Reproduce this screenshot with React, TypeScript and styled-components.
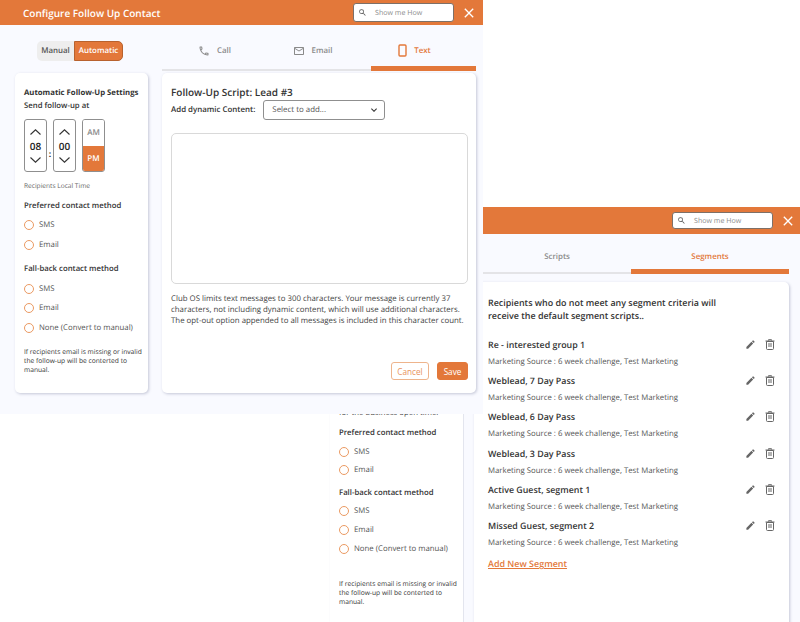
import React from "react";
import styled, { createGlobalStyle } from "styled-components";
import { MdEdit, MdOutlineEmail, MdOutlineLocalPhone, MdSearch, MdClose, MdKeyboardArrowDown } from "react-icons/md";

const orange = "#e3783a";
const pageBg = "#f9faff";

const Global = createGlobalStyle`
  html, body { margin: 0; padding: 0; background: #fff; }
  * { box-sizing: border-box; }
  body {
    font-family: "Open Sans", "Liberation Sans", sans-serif;
    color: #333;
    text-rendering: geometricPrecision;
  }
`;

const Canvas = styled.div`
  position: relative;
  width: 800px;
  height: 622px;
  overflow: hidden;
`;

/* the three screens are pasted on a free canvas */
const MainWindow = styled.section`
  position: absolute;
  left: 0;
  top: 0;
  width: 483px;
  height: 414px;
  background: ${pageBg};
  z-index: 2;
`;

const SegmentsWindow = styled.section`
  position: absolute;
  left: 464px;
  top: 207px;
  width: 336px;
  height: 415px;
  background: ${pageBg};
  z-index: 1;
`;

const CutOffWindow = styled.section`
  position: absolute;
  left: 330px;
  top: 414px;
  width: 134px;
  height: 208px;
  background: #fff;
  border-right: 1px solid #e3e5ee;
  box-shadow: 1px 0 2px rgba(60, 70, 110, 0.18);
  padding: 0 4px 0 9px;
  overflow: hidden;
  z-index: 1;
`;

const Header = styled.header<{ $h: number; $left: number; $right: number }>`
  height: ${(p) => p.$h}px;
  background: ${orange};
  display: flex;
  align-items: center;
  padding-left: ${(p) => p.$left}px;
  padding-right: ${(p) => p.$right}px;
`;

const HeaderTitle = styled.h1`
  flex: 1;
  margin: 0;
  color: #fff;
  font-size: 10px;
  font-weight: 600;
`;

const SearchBox = styled.div<{ $h: number }>`
  width: 101px;
  height: ${(p) => p.$h}px;
  background: #fff;
  border: 1px solid #7d7068;
  border-radius: 3px;
  display: flex;
  align-items: center;
  padding-left: 4px;
  gap: 8px;
  color: #8c8c8c;
  font-size: 7.1px;
`;

const CloseBtn = styled.span`
  width: 24px;
  margin-left: 3px;
  display: flex;
  justify-content: center;
  color: #fff;
  font-size: 16px;
`;

const TopRow = styled.div`
  display: flex;
  height: 46px;
`;

const ToggleArea = styled.div`
  width: 162px;
  padding: 16px 0 0 37px;
`;

const Toggle = styled.div`
  display: flex;
  width: 86px;
  height: 20px;
  font-size: 7.9px;
  font-weight: 600;
`;

const ToggleSide = styled.span<{ $on?: boolean }>`
  flex: ${(p) => (p.$on ? "0 0 49px" : "1")};
  display: flex;
  align-items: center;
  justify-content: center;
  border-radius: ${(p) => (p.$on ? "0 5px 5px 0" : "5px 0 0 5px")};
  background: ${(p) => (p.$on ? orange : "#eeeeee")};
  border: ${(p) => (p.$on ? "1px solid #b8622e" : "none")};
  color: ${(p) => (p.$on ? "#fff" : "#555")};
`;

const Tabs = styled.nav<{ $w: number }>`
  width: ${(p) => p.$w}px;
  display: flex;
`;

const Tab = styled.div<{ $w: number; $on?: boolean; $h: number; $shift?: number }>`
  width: ${(p) => p.$w}px;
  height: ${(p) => p.$h}px;
  display: flex;
  align-items: center;
  justify-content: center;
  gap: 7px;
  padding-top: ${(p) => (p.$on ? 10 : 7)}px;
  padding-right: ${(p) => p.$shift ?? 0}px;
  font-size: 7.9px;
  font-weight: 600;
  color: ${(p) => (p.$on ? orange : "#8a8a8a")};
  border-bottom: 2px solid #e4e4e7;
  ${(p) => p.$on && `border-bottom: 5px solid ${orange};`}
`;

const Columns = styled.div`
  display: flex;
  gap: 14px;
  padding: 2px 0 0 15px;
`;

const Card = styled.div`
  background: #fff;
  border-radius: 5px;
  box-shadow: 1px 1px 3px rgba(60, 70, 110, 0.28);
`;

const SettingsCard = styled(Card)`
  width: 133px;
  height: 320px;
  padding: 14px 5px 13px 9px;
`;

const ScriptCard = styled(Card)`
  width: 314px;
  height: 320px;
  padding: 12px 8px 0 9px;
  display: flex;
  flex-direction: column;
`;

const CardHeading = styled.div`
  font-size: 7.76px;
  font-weight: 700;
  line-height: 13px;
  white-space: nowrap;
`;

const SendAt = styled.div`
  font-size: 7.75px;
  font-weight: 600;
  line-height: 13px;
`;

const TimeRow = styled.div`
  display: flex;
  margin-top: 6px;
  align-items: center;
`;

const Spinner = styled.div`
  width: 23px;
  height: 53px;
  border: 1px solid #8f8f8f;
  border-radius: 3px;
  display: flex;
  flex-direction: column;
  align-items: center;
  justify-content: center;
  gap: 4px;
  font-size: 10px;
  font-weight: 600;
  line-height: 14px;
  color: #222;
`;

const Colon = styled.span`
  width: 6px;
  text-align: center;
  font-size: 8.5px;
  font-weight: 700;
  padding-top: 18px;
`;

const AmPm = styled.div`
  width: 23px;
  height: 53px;
  margin-left: 6px;
  border: 1px solid #8f8f8f;
  border-radius: 3px;
  overflow: hidden;
  display: flex;
  flex-direction: column;
  font-size: 8px;
  font-weight: 600;
`;

const Meridiem = styled.span<{ $on?: boolean }>`
  flex: 1;
  display: flex;
  align-items: center;
  justify-content: center;
  background: ${(p) => (p.$on ? orange : "#fff")};
  color: ${(p) => (p.$on ? "#fff" : "#8a8a8a")};
`;

const LocalTime = styled.div`
  margin-top: 9px;
  font-size: 6.6px;
  color: #666;
  line-height: 10px;
`;

const MethodTitle = styled.div<{ $top: number }>`
  margin-top: ${(p) => p.$top}px;
  font-size: 7.75px;
  font-weight: 600;
  line-height: 12px;
  color: #333;
  white-space: nowrap;
`;

const MethodRow = styled.div<{ $top: number }>`
  margin-top: ${(p) => p.$top}px;
  display: flex;
  align-items: center;
  gap: 5px;
  height: 12px;
  font-size: 7.8px;
  color: #555;
`;

const Radio = styled.span`
  width: 10px;
  height: 10px;
  border-radius: 50%;
  border: 1px solid #eb9a62;
`;

const Note = styled.p<{ $top: number }>`
  margin: ${(p) => p.$top}px 0 0;
  font-size: 6.7px;
  line-height: 9.2px;
  color: #333;
`;

const ScriptTitle = styled.h2`
  margin: 0;
  font-size: 10px;
  font-weight: 600;
  line-height: 15px;
  color: #333;
`;

const DynamicRow = styled.div`
  display: flex;
  align-items: center;
  gap: 8px;
  font-size: 7.9px;
  font-weight: 600;
`;

const SelectBox = styled.div`
  width: 122px;
  height: 20px;
  border: 1px solid #8f8f8f;
  border-radius: 3px;
  display: flex;
  align-items: center;
  justify-content: space-between;
  padding: 0 4px 0 8px;
  font-size: 7.9px;
  font-weight: 400;
  color: #555;
`;

const MessageBox = styled.div`
  margin-top: 13px;
  width: 297px;
  height: 151px;
  border: 1px solid #d9d9d9;
  border-radius: 5px;
`;

const Hint = styled.p`
  margin: 10px 0 0;
  font-size: 7.85px;
  line-height: 10.8px;
  color: #444;
  white-space: nowrap;
`;

const Actions = styled.div`
  margin-top: auto;
  margin-bottom: 13px;
  display: flex;
  justify-content: flex-end;
  gap: 8px;
  width: 297px;
`;

const Button = styled.button<{ $primary?: boolean }>`
  height: 18px;
  width: ${(p) => (p.$primary ? 31 : 38)}px;
  padding: 0;
  border-radius: 3px;
  font: 400 8.2px "Open Sans", sans-serif;
  color: ${(p) => (p.$primary ? "#fff" : "#e8925c")};
  background: ${(p) => (p.$primary ? orange : "#fff")};
  border: 1px solid ${(p) => (p.$primary ? orange : "#eeb48c")};
`;

const SegmentsHeaderWrap = styled.div`
  padding-left: 19px;
`;

const SegmentsTabs = styled.div`
  padding: 0 0 0 19px;
  height: 40px;
`;

const SegmentsCard = styled(Card)`
  margin: 8px 0 0 10px;
  width: 315px;
  height: 360px;
  border-radius: 5px 5px 0 0;
  padding: 14px 14px 0 14px;
`;

const Intro = styled.p`
  margin: 0;
  font-size: 8.93px;
  font-weight: 600;
  line-height: 13.4px;
  color: #333;
`;

const SegmentList = styled.div`
  margin-top: 16px;
  display: flex;
  flex-direction: column;
  gap: 6.5px;
`;

const SegmentRow = styled.div`
  position: relative;
  height: 29.8px;
`;

const SegmentName = styled.div`
  font-size: 8.85px;
  font-weight: 600;
  line-height: 13px;
  color: #333;
`;

const SegmentSource = styled.div`
  margin-top: 4px;
  font-size: 7.8px;
  line-height: 12px;
  color: #555;
`;

const SegmentActions = styled.div`
  position: absolute;
  right: 0;
  top: 0;
  display: flex;
  gap: 9px;
  align-items: center;
  color: #666;
`;

const AddLink = styled.a`
  display: inline-block;
  font-size: 8.95px;
  font-weight: 600;
  color: ${orange};
  text-decoration: underline;
`;

const ClippedLine = styled.div`
  margin-top: -6px;
  height: 10px;
  font-size: 7.8px;
  color: #444;
`;

const TrashIcon = () => (
  <svg width="10" height="11" viewBox="0 0 10 11" fill="none" stroke="#666" strokeWidth="1">
    <path d="M1.5 2.5h7v7a1 1 0 0 1-1 1h-5a1 1 0 0 1-1-1z" />
    <path d="M0.5 2h9M3.5 1.5V.7h3v.8M3 5h4M3 7h4" />
  </svg>
);

const PhoneFrame = () => (
  <svg width="9" height="13" viewBox="0 0 9 13" fill="none">
    <rect x="1" y="1" width="7" height="11" rx="1" stroke={orange} strokeWidth="1.4" />
  </svg>
);

const Chevron = ({ up }: { up?: boolean }) => (
  <svg width="11" height="6" viewBox="0 0 11 6" fill="none" stroke="#333" strokeWidth="1.1">
    <path d={up ? "M0.5 5.5L5.5 0.8L10.5 5.5" : "M0.5 0.5L5.5 5.2L10.5 0.5"} />
  </svg>
);

const segments = [
  "Re - interested group 1",
  "Weblead, 7 Day Pass",
  "Weblead, 6 Day Pass",
  "Weblead, 3 Day Pass",
  "Active Guest, segment 1",
  "Missed Guest, segment 2",
];

const Option = ({ label, top }: { label: string; top: number }) => (
  <MethodRow $top={top}>
    <Radio />
    {label}
  </MethodRow>
);

const Search = ({ h }: { h: number }) => (
  <SearchBox $h={h}>
    <MdSearch size={9} color="#555" />
    <span>Show me How</span>
  </SearchBox>
);

export default function App() {
  return (
    <Canvas>
      <Global />
      <MainWindow>
        <Header $h={25} $left={23} $right={2}>
          <HeaderTitle>Configure Follow Up Contact</HeaderTitle>
          <Search h={19} />
          <CloseBtn><MdClose /></CloseBtn>
        </Header>
        <TopRow>
          <ToggleArea>
            <Toggle>
              <ToggleSide>Manual</ToggleSide>
              <ToggleSide $on>Automatic</ToggleSide>
            </Toggle>
          </ToggleArea>
          <Tabs $w={314}>
            <Tab $w={105} $h={46}><MdOutlineLocalPhone size={12} />Call</Tab>
            <Tab $w={104} $h={46} $shift={13}><MdOutlineEmail size={12} />Email</Tab>
            <Tab $w={105} $h={46} $on $shift={18}><PhoneFrame />Text</Tab>
          </Tabs>
        </TopRow>
        <Columns>
          <SettingsCard>
            <CardHeading>Automatic Follow-Up Settings</CardHeading>
            <SendAt>Send follow-up at</SendAt>
            <TimeRow>
              <Spinner><Chevron up />08<Chevron /></Spinner>
              <Colon>:</Colon>
              <Spinner><Chevron up />00<Chevron /></Spinner>
              <AmPm>
                <Meridiem>AM</Meridiem>
                <Meridiem $on>PM</Meridiem>
              </AmPm>
            </TimeRow>
            <LocalTime>Recipients Local Time</LocalTime>
            <MethodTitle $top={9}>Preferred contact method</MethodTitle>
            <Option label="SMS" top={7} />
            <Option label="Email" top={8} />
            <MethodTitle $top={12}>Fall-back contact method</MethodTitle>
            <Option label="SMS" top={8} />
            <Option label="Email" top={7} />
            <Option label="None (Convert to manual)" top={8} />
            <Note $top={13}>If recipients email is missing or invalid the follow-up will be conterted to manual.</Note>
          </SettingsCard>
          <ScriptCard>
            <ScriptTitle>Follow-Up Script: Lead #3</ScriptTitle>
            <DynamicRow>
              Add dynamic Content:
              <SelectBox>Select to add...<MdKeyboardArrowDown size={12} color="#333" /></SelectBox>
            </DynamicRow>
            <MessageBox />
            <Hint>
              Club OS limits text messages to 300 characters. Your message is currently 37<br />
              characters, not including dynamic content, which will use additional characters.<br />
              The opt-out option appended to all messages is included in this character count.
            </Hint>
            <Actions>
              <Button>Cancel</Button>
              <Button $primary>Save</Button>
            </Actions>
          </ScriptCard>
        </Columns>
      </MainWindow>

      <CutOffWindow>
        <ClippedLine>for the business open time.</ClippedLine>
        <MethodTitle $top={9}>Preferred contact method</MethodTitle>
        <Option label="SMS" top={7} />
        <Option label="Email" top={6} />
        <MethodTitle $top={11}>Fall-back contact method</MethodTitle>
        <Option label="SMS" top={6} />
        <Option label="Email" top={7} />
        <Option label="None (Convert to manual)" top={7} />
        <Note $top={24}>If recipients email is missing or invalid the follow-up will be conterted to manual.</Note>
      </CutOffWindow>

      <SegmentsWindow>
        <SegmentsHeaderWrap>
          <Header $h={27} $left={0} $right={0}>
            <HeaderTitle />
            <Search h={17} />
            <CloseBtn><MdClose /></CloseBtn>
          </Header>
        </SegmentsHeaderWrap>
        <SegmentsTabs>
          <Tabs $w={306}>
            <Tab $w={148} $h={40}>Scripts</Tab>
            <Tab $w={158} $h={40} $on>Segments</Tab>
          </Tabs>
        </SegmentsTabs>
        <SegmentsCard>
          <Intro>
            Recipients who do not meet any segment criteria will<br />
            receive the default segment scripts..
          </Intro>
          <SegmentList>
            {segments.map((name) => (
              <SegmentRow key={name}>
                <SegmentName>{name}</SegmentName>
                <SegmentSource>Marketing Source : 6 week challenge, Test Marketing</SegmentSource>
                <SegmentActions>
                  <MdEdit size={11} />
                  <TrashIcon />
                </SegmentActions>
              </SegmentRow>
            ))}
          </SegmentList>
          <AddLink>Add New Segment</AddLink>
        </SegmentsCard>
      </SegmentsWindow>
    </Canvas>
  );
}
